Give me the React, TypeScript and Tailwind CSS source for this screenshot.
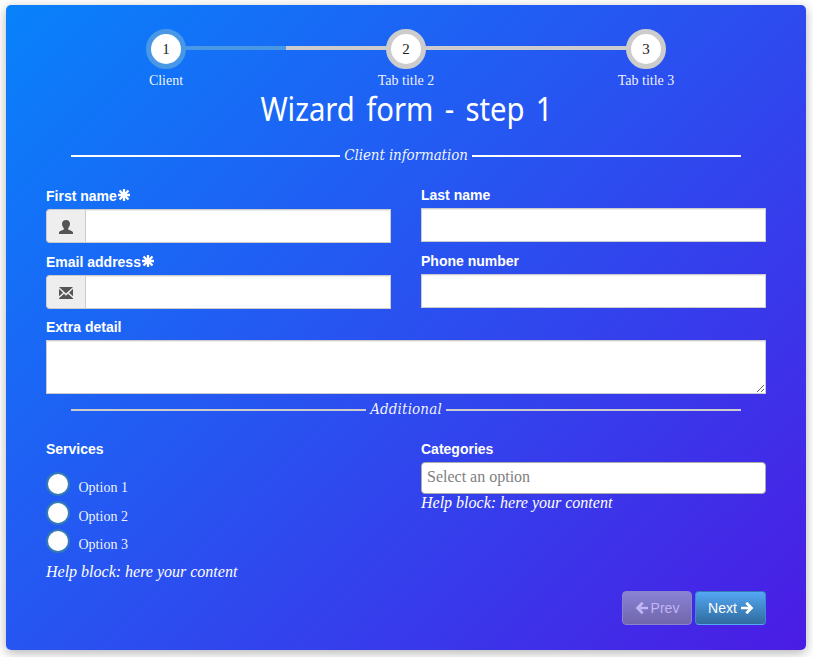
import React from "react";

const serif = "font-['Liberation_Serif',serif]";
const sans = "font-['Liberation_Sans',sans-serif]";

function Step({ n, title, active }: { n: number; title: string; active?: boolean }) {
  return (
    <li className="flex w-[240px] flex-col items-center">
      <div className="relative flex h-10 w-full justify-center">
        <div className="absolute top-[17px] left-0 flex h-1 w-full">
          <div className={`h-full flex-1 ${n === 1 ? "" : "bg-[#ccc]"}`} />
          <div className={`h-full flex-1 ${n === 3 ? "" : active ? "bg-[#4898e6]" : "bg-[#ccc]"}`} />
        </div>
        <span className={`relative flex size-10 items-center justify-center rounded-full border-5 bg-white text-[15px] leading-5 text-[#222] ${active ? "border-[#4898e6]" : "border-[#ccc]"}`}>{n}</span>
      </div>
      <span className="mt-0.5 text-sm leading-5 text-white/95">{title}</span>
    </li>
  );
}

function Asterisk() {
  return (
    <svg viewBox="0 0 14 14" className="-mt-0.5 size-3.5" stroke="white" strokeWidth="2.3">
      <path d="M7 1V13M1 7H13M2.5 2.5L11.5 11.5M11.5 2.5L2.5 11.5" />
    </svg>
  );
}

function Arrow({ left }: { left?: boolean }) {
  return (
    <svg viewBox="0 0 14 14" className={`size-3.5 ${left ? "-scale-x-100" : ""}`} fill="none" stroke="currentColor" strokeWidth="2.7">
      <path d="M1 7H11M6.3 1.8L11.5 7L6.3 12.2" />
    </svg>
  );
}

function Field({ label, required, children }: { label: string; required?: boolean; children?: React.ReactNode }) {
  return (
    <div className="h-[66px] w-[345px]">
      <label className={`flex h-5 items-center text-sm leading-5 font-bold text-white ${sans} ${required ? "mt-px" : ""}`}>
        {label}{required && <Asterisk />}
      </label>
      <div className="mt-[3px] flex h-[34px]">
        {children && <span className="flex w-[39px] items-center justify-center rounded-l border border-r-0 border-[#ccc] bg-[#eee] pt-0.5 text-[#555]">{children}</span>}
        <input className="h-full min-w-0 flex-1 border border-[#ccc] bg-white px-3 shadow-[inset_0_1px_1px_rgba(0,0,0,0.075)]" />
      </div>
    </div>
  );
}

function Divider({ text, line, tracking }: { text: string; line: string; tracking: string }) {
  return (
    <div className="mx-[25px] flex h-5 items-center gap-1">
      <div className={`h-0.5 flex-1 ${line}`} />
      <span className={`-mt-0.5 font-['DejaVu_Serif_Condensed','DejaVu_Serif',serif] text-[15px] leading-5 text-white/95 italic ${tracking}`}>{text}</span>
      <div className={`h-0.5 flex-1 ${line}`} />
    </div>
  );
}

function Option({ text }: { text: string }) {
  return (
    <label className="flex h-[28.5px] items-start">
      <span className="size-6 rounded-full border-2 border-[#337ab7] bg-white" />
      <span className="mt-1.5 ml-[8.5px] text-sm leading-5 text-white/95">{text}</span>
    </label>
  );
}

export default function App() {
  return (
    <div className={`h-[657px] w-[813px] overflow-hidden bg-white pt-[5px] pl-1.5 ${serif}`}>
      <div className="flex h-[645px] w-[800px] flex-col rounded-[5px] bg-linear-[135deg,#0882fb_0%,#2a50f0_50%,#4b1ce4_100%] px-10 pt-6 shadow-[0_3px_12px_rgba(0,0,0,0.3)]">
        <ul className="flex h-[62px]">
          <Step n={1} title="Client" active />
          <Step n={2} title="Tab title 2" />
          <Step n={3} title="Tab title 3" />
        </ul>
        <h3 className="-mt-px h-14 origin-center scale-x-[0.915] pl-px text-center font-['Noto_Sans',sans-serif] text-[32px] leading-[37px] whitespace-nowrap text-white [word-spacing:4px]">Wizard form - step 1</h3>
        <Divider text="Client information" line="bg-white" tracking="tracking-[-0.1px]" />
        <div className="mt-[19px] flex justify-between">
          <Field label="First name" required>
            <svg viewBox="0 0 14 14" className="size-3.5" fill="currentColor"><path d="M7 0C4.6 0 3 1.3 3 3.8C3 5.6 3.9 7.3 4.8 8.2V9.4C4 10 0 10.8 0 12.6V14H14V12.6C14 10.8 10 10 9.2 9.4V8.2C10.1 7.3 11 5.6 11 3.8C11 1.3 9.4 0 7 0Z" /></svg>
          </Field>
          <Field label="Last name" />
        </div>
        <div className="flex justify-between">
          <Field label="Email address" required>
            <svg viewBox="0 0 14 12" className="h-3 w-3.5" fill="currentColor"><path d="M0 0H14L7 6.4ZM0 1.8L4 5.7L0 9.3ZM14 1.8V9.3L10 5.7ZM5 6.8L7 8.7L9 6.8L14 11.2V12H0V11.2Z" /></svg>
          </Field>
          <Field label="Phone number" />
        </div>
        <label className={`h-[23px] text-sm leading-5 font-bold text-white ${sans}`}>Extra detail</label>
        <textarea className="block h-[54px] w-full shrink-0 border border-[#ccc] bg-white shadow-[inset_0_1px_1px_rgba(0,0,0,0.075)]" />
        <div className="mt-[6px]"><Divider text="Additional" line="bg-[#ccc]" tracking="tracking-[0.15px]" /></div>
        <div className="mt-[19px] flex h-[152px] justify-between">
          <div className="w-[345px]">
            <p className={`text-sm leading-5 font-bold text-white ${sans}`}>Services</p>
            <div className="mt-[13px]">
              <Option text="Option 1" />
              <Option text="Option 2" />
              <Option text="Option 3" />
            </div>
            <p className="mt-[4px] text-base leading-5 text-white italic">Help block: here your content</p>
          </div>
          <div className="w-[345px]">
            <p className={`text-sm leading-5 font-bold text-white ${sans}`}>Categories</p>
            <div className="mt-[3px] h-8 rounded border border-[#aaa] bg-white px-[5px] text-base leading-7 text-[#808080]">Select an option</div>
            <p className="-mt-px text-base leading-5 text-white italic">Help block: here your content</p>
          </div>
        </div>
        <div className={`flex justify-end gap-[3px] text-sm ${sans}`}>
          <button className="flex h-[34px] w-[70px] items-center justify-center gap-0.5 rounded border border-[#8883cf] bg-linear-to-b from-[#8983d4] to-[#7066ac] text-[#c1b5f5]"><Arrow left />Prev</button>
          <button className="flex h-[34px] w-[71px] items-center justify-center gap-[3px] rounded border border-t-[#337ab7] border-x-[#3c8ad0] border-b-[#54a8f4] bg-linear-to-b from-[#54a8f5] to-[#306b9e] pl-px text-white">Next<Arrow /></button>
        </div>
      </div>
    </div>
  );
}
